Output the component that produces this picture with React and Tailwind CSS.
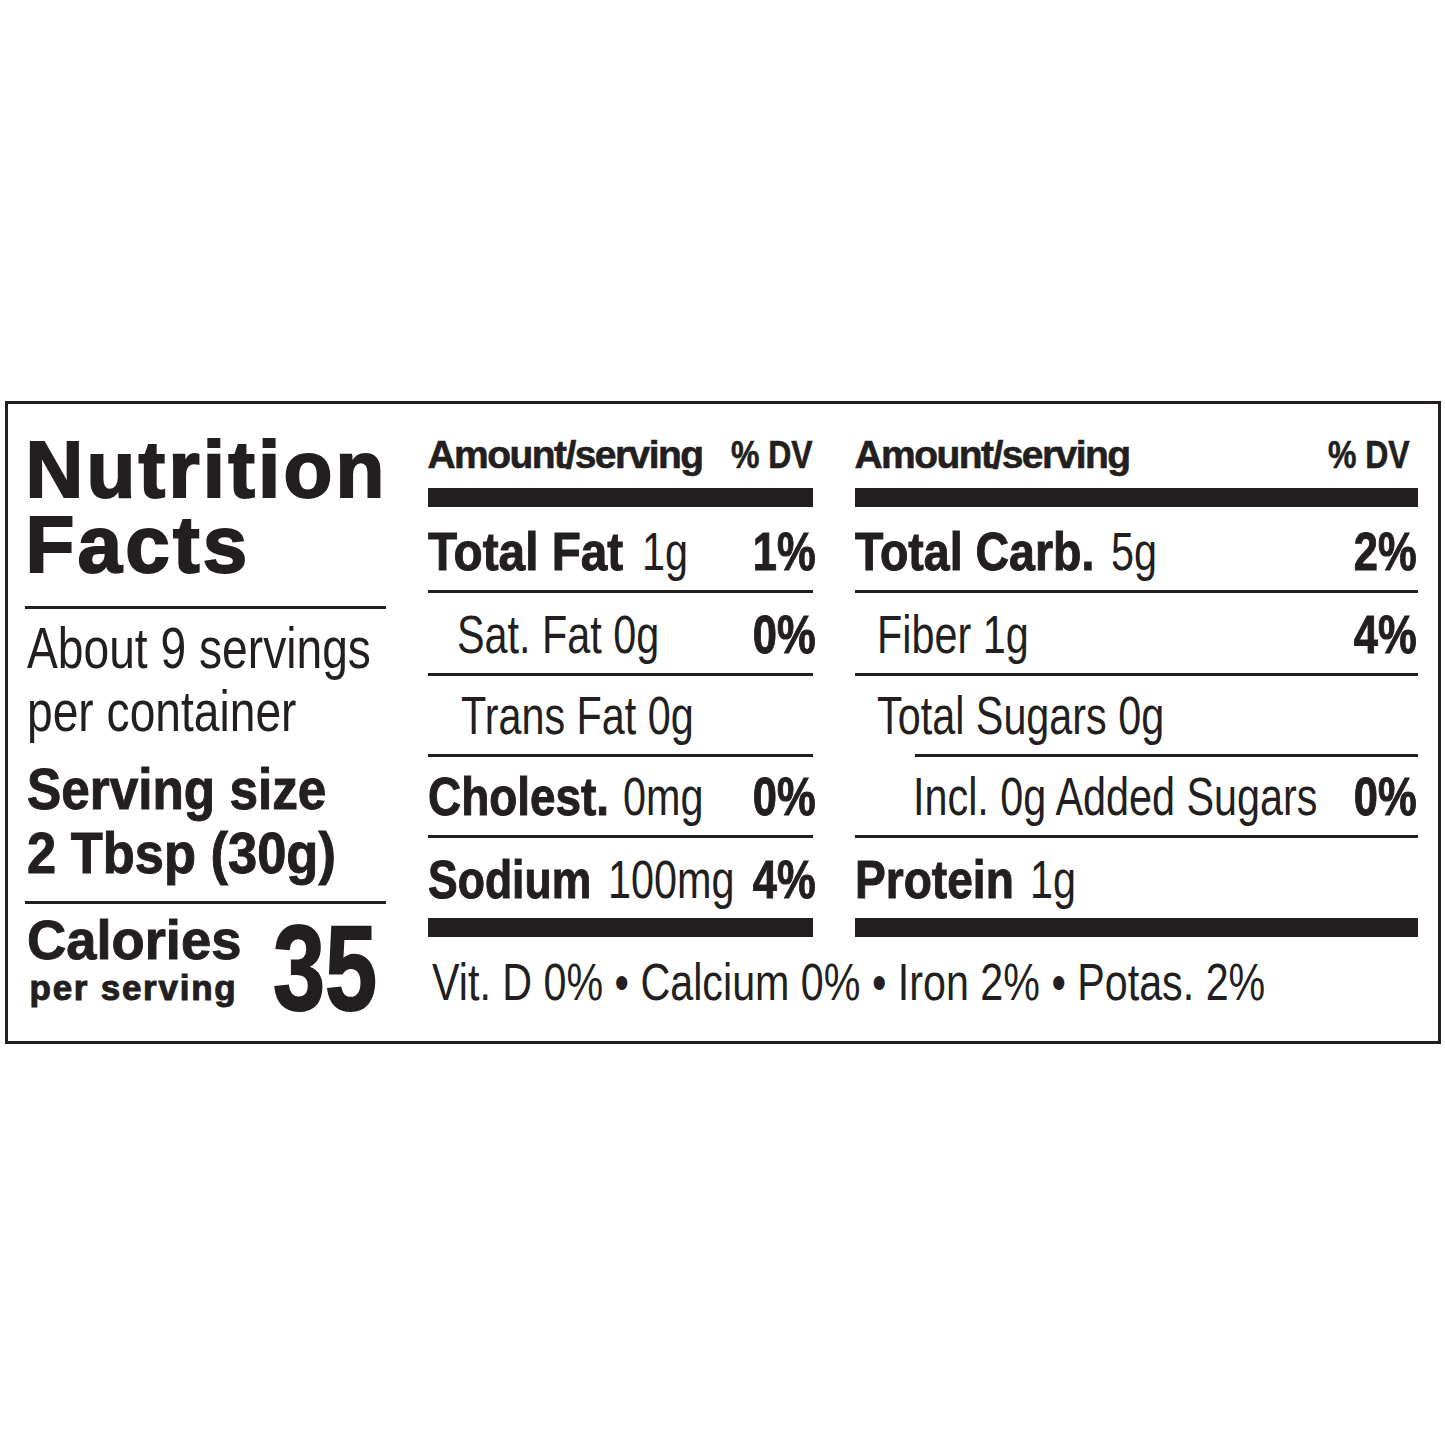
import React from "react";

const SANS = "font-['Liberation_Sans',Arial,sans-serif]";

// text squeezed to the label's condensed width
const T = ({ w = "", s = "", o = "origin-left", className = "", children }) => (
  <span className={`inline-block whitespace-nowrap ${w}`}>
    <span className={`inline-block ${o} ${s} ${className}`}>{children}</span>
  </span>
);

const Bold = ({ w, s = "scale-x-[0.87]", children }) => (
  <T w={w} s={s} className="font-bold text-[53px] [-webkit-text-stroke:1px_#231f20]">{children}</T>
);
const Reg = ({ children }) => (
  <T s="scale-x-[0.78]" className="text-[53px]">{children}</T>
);
const Pct = ({ children }) => (
  <T o="origin-right" s="scale-x-[0.82]" className="font-bold text-[53px] [-webkit-text-stroke:1px_#231f20]">{children}</T>
);

const Row = ({ h = "h-[80px]", children, pct, indent = "" }) => (
  <div className={`flex items-end ${h} pb-[12px] ${indent}`}>
    <div className="flex-1 min-w-0 leading-none whitespace-nowrap">{children}</div>
    {pct && <div className="shrink-0 leading-none -mr-[3px]">{pct}</div>}
  </div>
);

const Line = ({ className = "" }) => <div className={`h-[3px] bg-[#231f20] ${className}`} />;

const Header = ({ right = "" }) => (
  <>
    <div className={`flex items-end pt-[31px] pb-[14px] leading-none ${right}`}>
      <span className="flex-1 font-bold text-[39px] tracking-[-0.04em] whitespace-nowrap [-webkit-text-stroke:0.6px_#231f20]">Amount/serving</span>
      <T o="origin-right" s="scale-x-[0.82]" className="font-bold text-[39px] [-webkit-text-stroke:0.6px_#231f20]">% DV</T>
    </div>
    <div className="h-[19px] bg-[#231f20]" />
  </>
);

export default function App() {
  return (
    <div className={`w-[1445px] h-[1445px] bg-white flex items-center justify-center text-[#231f20] ${SANS}`}>
      <div className="w-[1436px] h-[643px] border-[3px] border-[#231f20] flex pl-[17px] pr-[19px]">
        {/* left */}
        <div className="w-[361px] shrink-0 flex flex-col">
          <div className="pt-[28px] pb-[24px] font-bold text-[80px] leading-[75px] tracking-[0.04em] whitespace-nowrap pl-[1px] [-webkit-text-stroke:2px_#231f20]">
            <div>Nutrition</div>
            <div>Facts</div>
          </div>
          <Line />
          <div className="pt-[8px] text-[57px] leading-[63px] pl-[2px]">
            <div><T s="scale-x-[0.81]">About 9 servings</T></div>
            <div><T s="scale-x-[0.81]">per container</T></div>
          </div>
          <div className="pt-[14px] pb-[16px] font-bold text-[57px] leading-[64px] pl-[2px] [-webkit-text-stroke:1px_#231f20]">
            <div><T s="scale-x-[0.9]">Serving size</T></div>
            <div><T s="scale-x-[0.92]">2 Tbsp (30g)</T></div>
          </div>
          <Line />
          <div className="flex items-start pt-[4px] pl-[2px]">
            <div className="w-[246px] shrink-0 mt-[4px] font-bold [-webkit-text-stroke:1px_#231f20]">
              <div className="text-[56px] leading-[56px]"><T s="scale-x-[0.97]">Calories</T></div>
              <div className="text-[35px] leading-[40px] tracking-[0.05em] pl-[3px] whitespace-nowrap">per serving</div>
            </div>
            <div className="shrink-0 font-bold text-[120px] leading-[120px] [-webkit-text-stroke:2px_#231f20]">
              <T s="scale-x-[0.78]">35</T>
            </div>
          </div>
        </div>

        {/* right area */}
        <div className="ml-[42px] flex flex-col">
          <div className="flex gap-[42px]">
            <div className="w-[385px] flex flex-col">
              <Header />
              <Row h="h-[83px]" pct={<Pct>1%</Pct>}>
                <Bold w="w-[214px]" s="scale-x-[0.9]">Total Fat</Bold><Reg>1g</Reg>
              </Row>
              <Line />
              <Row pct={<Pct>0%</Pct>} indent="pl-[29px]"><Reg>Sat. Fat 0g</Reg></Row>
              <Line />
              <Row h="h-[78px]" indent="pl-[33px]"><Reg>Trans Fat 0g</Reg></Row>
              <Line />
              <Row h="h-[78px]" pct={<Pct>0%</Pct>}>
                <Bold w="w-[195px]" s="scale-x-[0.866]">Cholest.</Bold><Reg>0mg</Reg>
              </Row>
              <Line />
              <Row pct={<Pct>4%</Pct>}>
                <Bold w="w-[180px]" s="scale-x-[0.84]">Sodium</Bold><Reg>100mg</Reg>
              </Row>
              <div className="h-[19px] bg-[#231f20]" />
            </div>
            <div className="w-[563px] flex flex-col">
              <Header right="pr-[8px]" />
              <Row h="h-[83px]" pct={<Pct>2%</Pct>} indent="pr-[4px]">
                <Bold w="w-[256px]" s="scale-x-[0.877]">Total Carb.</Bold><Reg>5g</Reg>
              </Row>
              <Line />
              <Row pct={<Pct>4%</Pct>} indent="pl-[22px] pr-[4px]"><Reg>Fiber 1g</Reg></Row>
              <Line />
              <Row h="h-[78px]" indent="pl-[22px]"><Reg>Total Sugars 0g</Reg></Row>
              <Line className="ml-[60px]" />
              <Row h="h-[78px]" pct={<Pct>0%</Pct>} indent="pl-[58px] pr-[4px]"><Reg>Incl. 0g Added Sugars</Reg></Row>
              <Line />
              <Row>
                <Bold w="w-[175px]">Protein</Bold><Reg>1g</Reg>
              </Row>
              <div className="h-[19px] bg-[#231f20]" />
            </div>
          </div>
          <div className="mt-[19px] pl-[4px] text-[52px] leading-none whitespace-nowrap">
            <T s="scale-x-[0.793]">Vit. D 0% • Calcium 0% • Iron 2% • Potas. 2%</T>
          </div>
        </div>
      </div>
    </div>
  );
}
